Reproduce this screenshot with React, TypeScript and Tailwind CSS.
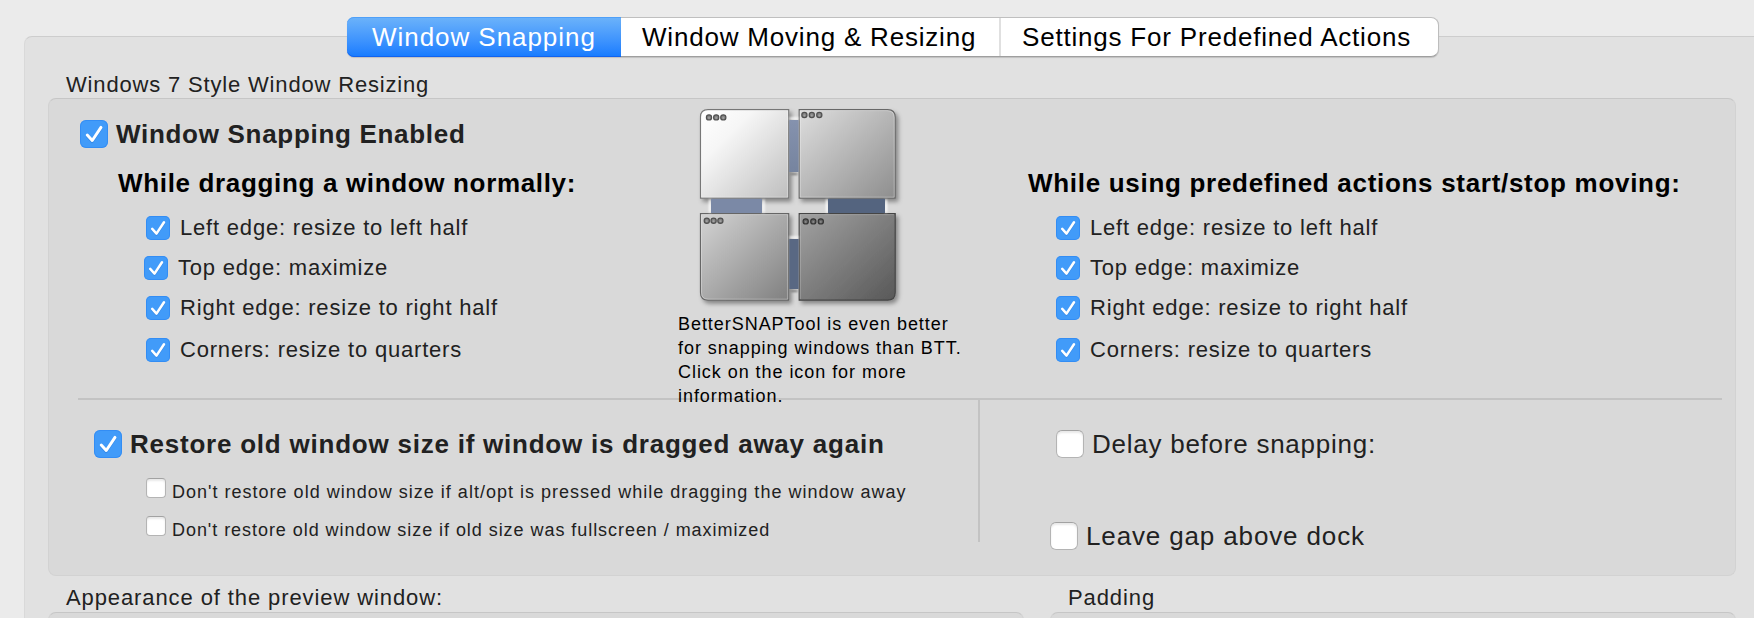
import React from "react";

type Size = "lg" | "md" | "sm";

const boxSize: Record<Size, string> = {
  lg: "size-7 rounded-[6px]",
  md: "size-6 rounded-[5px]",
  sm: "size-5 rounded-[4px]",
};

function CheckBox({ size, checked }: { size: Size; checked?: boolean }) {
  if (!checked) {
    return (
      <span
        className={`${boxSize[size]} block shrink-0 border border-[#b4b4b4] border-t-[#a2a2a2] bg-white shadow-[inset_0_2px_2px_rgba(0,0,0,0.09)]`}
      />
    );
  }
  return (
    <span
      className={`${boxSize[size]} block shrink-0 bg-[#419bf9] shadow-[inset_0_0_0_1px_rgba(40,130,240,0.55)]`}
    >
      <svg viewBox="0 0 24 24" className="block size-full" fill="none" strokeLinecap="round" strokeLinejoin="round">
        <path d="M6.2 13.9 L10.5 18.6 L18 7.3" stroke="#2d7fdc" strokeOpacity="0.6" strokeWidth="2.4" />
        <path d="M6.2 12.9 L10.5 17.6 L18 6.3" stroke="#fff" strokeWidth="2.5" />
      </svg>
    </span>
  );
}

function EdgeOption({ label, className = "" }: { label: string; className?: string }) {
  return (
    <label className={`flex h-6 items-center gap-2.5 text-[22px] leading-6 tracking-[0.8px] ${className}`}>
      <CheckBox size="md" checked />
      {label}
    </label>
  );
}

function MiniWindow({
  d,
  fill,
  stroke,
  dots,
  cy,
  dotFill = "#858585",
  dotStroke = "#505050",
}: {
  d: string;
  fill: string;
  stroke: string;
  dots: number[];
  cy: number;
  dotFill?: string;
  dotStroke?: string;
}) {
  return (
    <g>
      <path d={d} fill={fill} stroke={stroke} strokeWidth="1.2" filter="url(#drop)" />
      {dots.map((cx) => (
        <g key={cx}>
          <circle cx={cx} cy={cy} r="2.6" fill={dotFill} stroke={dotStroke} strokeWidth="1.2" />
          <circle cx={cx} cy={cy + 0.5} r="0.9" fill="#fff" fillOpacity="0.25" />
        </g>
      ))}
    </g>
  );
}

function SnapIcon() {
  return (
    <svg viewBox="692 101 216 212" className="block h-[212px] w-[216px]">
      <defs>
        <filter id="drop" x="-20%" y="-20%" width="140%" height="140%">
          <feDropShadow dx="2.5" dy="3" stdDeviation="2" floodColor="#000" floodOpacity="0.38" />
        </filter>
        <filter id="glow" x="-30%" y="-30%" width="160%" height="160%">
          <feGaussianBlur stdDeviation="1" />
        </filter>
        <linearGradient id="w1" x1="0" y1="0" x2="1" y2="1">
          <stop offset="0" stopColor="#ffffff" />
          <stop offset="0.3" stopColor="#f6f6f6" />
          <stop offset="1" stopColor="#bebebe" />
        </linearGradient>
        <linearGradient id="w2" x1="0" y1="0" x2="1" y2="1">
          <stop offset="0" stopColor="#dedede" />
          <stop offset="1" stopColor="#8e8e8e" />
        </linearGradient>
        <linearGradient id="w3" x1="0" y1="0" x2="1" y2="1">
          <stop offset="0" stopColor="#d4d4d4" />
          <stop offset="1" stopColor="#808080" />
        </linearGradient>
        <linearGradient id="w4" x1="0" y1="0" x2="1" y2="1">
          <stop offset="0" stopColor="#a2a2a2" />
          <stop offset="1" stopColor="#585858" />
        </linearGradient>
        <linearGradient id="b1" x1="0" y1="0" x2="0" y2="1">
          <stop offset="0" stopColor="#8592ae" />
          <stop offset="1" stopColor="#76849f" />
        </linearGradient>
      </defs>
      <MiniWindow
        d="M708 109.6H788.7V198.2H700.5V117Q700.5 109.6 708 109.6Z"
        fill="url(#w1)"
        stroke="#777"
        dots={[709, 716.2, 723.3]}
        cy={117.4}
      />
      <MiniWindow
        d="M799.2 109.6H887.6Q895.2 109.6 895.2 117.2V198.2H799.2Z"
        fill="url(#w2)"
        stroke="#686868"
        dots={[804.4, 811.8, 819.3]}
        cy={115}
      />
      <MiniWindow
        d="M700.5 213.6H788.7V300.2H708Q700.5 300.2 700.5 292.6Z"
        fill="url(#w3)"
        stroke="#666"
        dots={[706.8, 713.6, 720.4]}
        cy={220.7}
      />
      <MiniWindow
        d="M799.2 213.6H895.2V292.6Q895.2 300.2 887.6 300.2H799.2Z"
        fill="url(#w4)"
        stroke="#454545"
        dots={[805.7, 813.3, 820.8]}
        cy={221.4}
        dotFill="#666"
        dotStroke="#363636"
      />
      <g filter="url(#glow)">
        <path d="M789.5 118.5h9M710 199.5v13M763.5 199.5v13M827 199.5v13M886 199.5v13M789.5 237.5h9" stroke="#fff" strokeWidth="2" />
        <path d="M790.5 174h7M790.5 291h7" stroke="#777" strokeWidth="1.8" />
      </g>
      <rect x="789.3" y="120" width="9.3" height="52" fill="url(#b1)" />
      <rect x="711" y="198.8" width="51" height="14.2" fill="#7b89a6" />
      <rect x="828" y="198.8" width="57" height="14.2" fill="#54647f" />
      <rect x="789.3" y="239" width="9.3" height="50" fill="#596883" />
      <g fill="none" stroke="#fff" strokeOpacity="0.35">
        <path d="M787.7 110.6H708Q701.5 110.6 701.5 117V197.2H787.7Z" />
        <path d="M800.2 110.6H887Q894.2 110.6 894.2 117.6V197.2H800.2Z" />
        <path d="M701.5 214.6H787.7V299.2H708Q701.5 299.2 701.5 292.6Z" />
      </g>
      <path d="M800.2 299V214.6H894" fill="none" stroke="#fff" strokeOpacity="0.25" />
    </svg>
  );
}

function Tabs() {
  return (
    <nav className="relative z-10 ml-[347px] flex h-10 w-[1092px] text-[26px] leading-10 text-black">
      <button className="h-full w-[274px] rounded-l-[7px] bg-linear-to-b from-[#6cb3fa] to-[#147bff] pl-[25px] text-left tracking-[0.95px] whitespace-nowrap text-white shadow-[inset_0_-1px_0_#1263ee,inset_0_1px_0_#4fa0f8,0_1px_1px_rgba(0,0,0,0.15)]">
        Window Snapping
      </button>
      <div className="flex h-full flex-1 rounded-r-[8px] border-y border-r border-t-[#bfbfbf] border-r-[#bdbdbd] border-b-[#9f9f9f] bg-white leading-[38px] tracking-[0.8px] whitespace-nowrap shadow-[0_1px_1px_rgba(0,0,0,0.15)]">
        <button className="w-[380px] border-r-2 border-[#e0e0e0] pl-[21px] text-left">Window Moving &amp; Resizing</button>
        <button className="pl-[21px] text-left">Settings For Predefined Actions</button>
      </div>
    </nav>
  );
}

const edges = "border border-[#d2d2d2] border-t-[#c6c6c6] bg-[#d9d9d9]";

export default function App() {
  return (
    <div className="h-[618px] w-[1754px] overflow-hidden bg-[#ebebeb] pt-[17px] font-['Liberation_Sans',Arial,sans-serif] whitespace-nowrap text-[#212121]">
      <Tabs />
      <main className="-mt-[21px] ml-6 h-[620px] w-[1740px] rounded-tl-[8px] border border-[#d9d9d9] border-t-[#cdcdcd] bg-[#e1e1e1] pt-[35px] pl-[23px]">
        <h2 className="h-[26px] pl-[18px] text-[22px] leading-[26px] tracking-[0.83px]">
          Windows 7 Style Window Resizing
        </h2>

        <section className={`h-[478px] w-[1688px] rounded-[8px] ${edges}`}>
          <div className="flex h-[299px]">
            <div className="w-[628px] pt-[21px] pl-[31px]">
              <label className="flex h-7 items-center gap-2 text-[26px] leading-7 font-bold tracking-[0.7px]">
                <CheckBox size="lg" checked />
                Window Snapping Enabled
              </label>
              <h3 className="mt-[21px] ml-[38px] h-7 text-[26px] leading-7 font-bold tracking-[0.66px] text-black">
                While dragging a window normally:
              </h3>
              <div className="mt-[19px] ml-16">
                <EdgeOption label="Left edge: resize to left half" className="ml-0.5" />
                <EdgeOption label="Top edge: maximize" className="mt-4" />
                <EdgeOption label="Right edge: resize to right half" className="mt-4 ml-0.5" />
                <EdgeOption label="Corners: resize to quarters" className="mt-[18px] ml-0.5" />
              </div>
            </div>

            <div className="w-[340px] pt-0.5">
              <div className="ml-[15px]">
                <SnapIcon />
              </div>
              <p className="-mt-px ml-px h-24 w-[300px] text-[18px] leading-6 tracking-[0.95px] text-black">
                BetterSNAPTool is even better
                <br />
                for snapping windows than BTT.
                <br />
                Click on the icon for more
                <br />
                information.
              </p>
            </div>

            <div className="pt-[70px] pl-[11px]">
              <h3 className="h-7 text-[26px] leading-7 font-bold tracking-[0.7px] text-black">
                While using predefined actions start/stop moving:
              </h3>
              <div className="mt-[19px] ml-7">
                <EdgeOption label="Left edge: resize to left half" />
                <EdgeOption label="Top edge: maximize" className="mt-4" />
                <EdgeOption label="Right edge: resize to right half" className="mt-4" />
                <EdgeOption label="Corners: resize to quarters" className="mt-[18px]" />
              </div>
            </div>
          </div>

          <hr className="ml-[29px] h-0.5 w-[1644px] border-0 bg-[#c3c3c3]" />

          <div className="flex h-[142px]">
            <div className="w-[929px] pt-[30px] pl-[45px]">
              <label className="flex h-7 items-center gap-2 text-[26px] leading-7 font-bold tracking-[0.77px]">
                <CheckBox size="lg" checked />
                Restore old window size if window is dragged away again
              </label>
              <div className="mt-5 ml-[52px] text-[18px] leading-5">
                <label className="flex h-[38px] items-start gap-1.5 tracking-[1.01px]">
                  <CheckBox size="sm" />
                  <span className="pt-1">Don't restore old window size if alt/opt is pressed while dragging the window away</span>
                </label>
                <label className="flex h-[38px] items-start gap-1.5 tracking-[0.95px]">
                  <CheckBox size="sm" />
                  <span className="pt-1">Don't restore old window size if old size was fullscreen / maximized</span>
                </label>
              </div>
            </div>
            <div className="h-full w-0.5 bg-[#c3c3c3]" />
            <div className="pt-[30px] pl-[70px] text-[26px] leading-7">
              <label className="ml-1.5 flex h-7 items-center gap-2 tracking-[0.75px]">
                <CheckBox size="lg" />
                Delay before snapping:
              </label>
              <label className="mt-16 flex h-7 items-center gap-2 tracking-[0.86px]">
                <CheckBox size="lg" />
                Leave gap above dock
              </label>
            </div>
          </div>
        </section>

        <div className="flex gap-[26px] pt-[9px] text-[22px] leading-[26px] tracking-[0.9px]">
          <section className="w-[976px]">
            <h2 className="h-[27px] pl-[18px]">Appearance of the preview window:</h2>
            <div className={`h-20 rounded-[8px] ${edges}`} />
          </section>
          <section className="w-[686px]">
            <h2 className="h-[27px] pl-[18px]">Padding</h2>
            <div className={`h-20 rounded-[8px] ${edges}`} />
          </section>
        </div>
      </main>
    </div>
  );
}
